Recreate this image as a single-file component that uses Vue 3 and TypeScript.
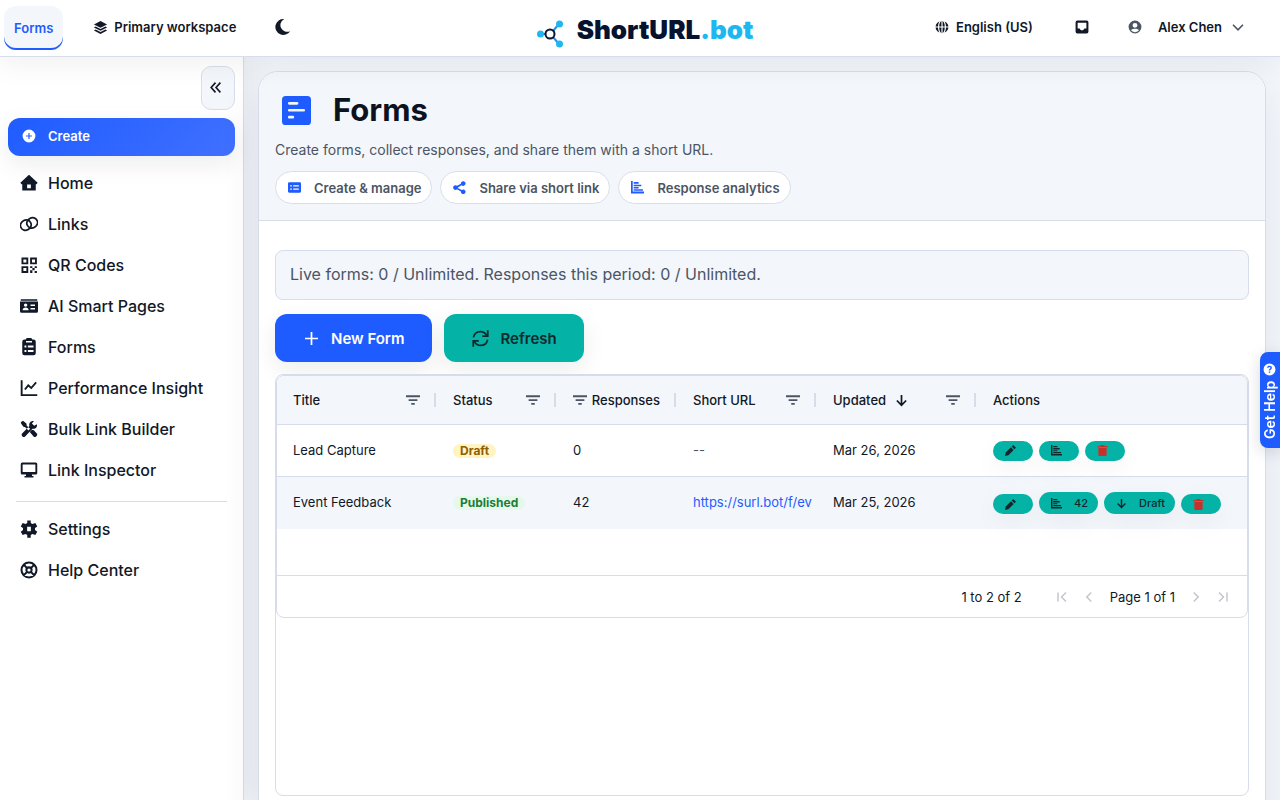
<script setup lang="ts">
import { h } from 'vue'

interface Glyph {
  fill?: string
  stroke?: string
  width?: number
}

const glyphs: Record<string, Glyph> = {
  layers: { fill: 'M12 1.5 22.5 7 12 12.3 1.5 7zM4.2 10.2 12 14.2l7.8-4 2.7 1.6L12 17.2 1.5 11.8zM4.2 15.2 12 19.2l7.8-4 2.7 1.6L12 22.4 1.5 16.8z' },
  moon: { fill: 'M13.5 1.5A8.6 8.6 0 0 0 21.5 17.5 10.6 10.6 0 1 1 13.5 1.5z' },
  globe: {
    fill: 'M11 1.5V11H7.2C7.4 6 8.9 2.4 11 1.5zM13 1.5c2.1.9 3.6 4.5 3.8 9.5H13zM11 13v9.500C8.900 21.600 7.400 18 7.200 13zM13 13h3.800c-.2 5-1.700 8.600-3.800 9.500zM7.500 2.500C6.200 4.600 5.300 7.600 5.200 11H1C1.400 7 4 3.800 7.500 2.500zM16.500 2.500C20 3.800 22.600 7 23 11h-4.200c-.1-3.400-1-6.400-2.300-8.500zM1 13h4.200c.1 3.400 1 6.400 2.300 8.500C4 20.200 1.400 17 1 13zM18.800 13H23c-.4 4-3 7.200-6.500 8.500 1.300-2.100 2.200-5.100 2.300-8.500z',
  },
  inbox: { fill: 'M4 1h16a3 3 0 0 1 3 3v16a3 3 0 0 1-3 3H4a3 3 0 0 1-3-3V4a3 3 0 0 1 3-3zM4.500 4.500v10H8c.6 2 2 3.200 4 3.200s3.400-1.200 4-3.200h3.500v-10z' },
  user: { fill: 'M12 1a11 11 0 1 1 0 22 11 11 0 0 1 0-22zM12 5a4.200 4.200 0 1 0 0 8.400A4.200 4.200 0 0 0 12 5zM5.200 17.200C6.700 19.500 9.200 21 12 21s5.300-1.500 6.800-3.800c-1.800-1.300-4.200-2-6.800-2s-5 .7-6.800 2z' },
  chevronDown: { stroke: 'M2 7.500 12 17.500l10-10', width: 3.200 },
  collapse: { stroke: 'M12 3 4 12l8 9M21 3l-8 9 8 9', width: 3 },
  plusCircle: { fill: 'M12 1a11 11 0 1 1 0 22 11 11 0 0 1 0-22zM11 7v4H7v2h4v4h2v-4h4v-2h-4V7z' },
  home: { fill: 'M12 1 23.500 11.500 22 13.500H21V22H3v-8.500H2L.5 11.500zM9.500 14v5h5v-5z' },
  links: { stroke: 'M1.500 17A7.200 6-30 1 1 14 10 7.200 6-30 1 1 1.500 17zM10 14A7.200 6-30 1 1 22.500 7 7.200 6-30 1 1 10 14z', width: 2.300 },
  qr: { fill: 'M2 2h9v9H2zM4.500 4.500v4h4v-4zM13.500 2h9v9h-9zM16 4.500v4h4v-4zM2 13.500h9v9H2zM4.500 16v4h4v-4zM13.500 13.500h3v2.500h-3zM19.500 13.500h3V16h-3zM16.500 16h3v3h-3zM13.500 19h3v3.500h-3zM19.500 20h3v2.500h-3z' },
  pages: { fill: 'M1 3h22v2H1zM0 6h24v13a2 2 0 0 1-2 2H2a2 2 0 0 1-2-2zM7.500 8.500a2.300 2.300 0 1 0 0 4.600 2.300 2.300 0 0 0 0-4.600zM3.500 17.500h8c0-2-1.800-3.400-4-3.400s-4 1.400-4 3.400zM14 10v2h6v-2zM14 14.500v2h6v-2z' },
  clipboard: { fill: 'M9 0h6l1.500 2H18a3 3 0 0 1 3 3v15a3 3 0 0 1-3 3H6a3 3 0 0 1-3-3V5a3 3 0 0 1 3-3h1.500zM8 4v2h8V4zM6 10v2.500h2.500V10zM10.500 10v2.500H18V10zM6 16v2.500h2.500V16zM10.500 16v2.500H18V16z' },
  chart: { stroke: 'M2.200 1.500v20H23M6.500 14 11 8.500l4 3.500 6.500-7.500', width: 2.500 },
  tools: { fill: 'M1.500 2.500 4 1l4.500 3.500.5 3 4.500 4.300-2.200 2.200L7 9.500 4.500 9 1 4zM22.500 5.500c1 4-2 6.800-5.800 6L6.500 22.200c-1.500 1.500-4.800-.8-4.300-3.700L12.500 8C11.500 4 14.500.8 18.500 1.500L15.800 4.800l3.200 3zM13 16l3-3 2.500.5 4.500 5c.5 2-2 4.500-4.300 4.300z' },
  monitor: { fill: 'M3 2h18a2 2 0 0 1 2 2v12a2 2 0 0 1-2 2h-5v2h2v2H6v-2h2v-2H3a2 2 0 0 1-2-2V4a2 2 0 0 1 2-2zM3.500 4.500v10h17v-10z' },
  gear: { fill: 'M9.700.5h4.600V4l2.200 1.300L20.500 4 23 8.500l-3 2.200v2.600l3 2.200-2.500 4.500-4-1.300-2.200 1.300v3.500H9.700V20l-2.200-1.300-4 1.300L1 15.500l3-2.200v-2.600L1 8.500 3.500 4l4 1.300L9.700 4zM9.500 9v6h5V9z' },
  lifebuoy: { stroke: 'M12 2a10 10 0 1 1 0 20 10 10 0 0 1 0-20zM12 8.500a3.500 3.500 0 1 1 0 7 3.500 3.500 0 0 1 0-7zM5 5l4.500 4.500M19 5l-4.500 4.500M5 19l4.500-4.500M19 19l-4.500-4.500', width: 2.700 },
  form: { fill: 'M3 0h18a3 3 0 0 1 3 3v18a3 3 0 0 1-3 3H3a3 3 0 0 1-3-3V3a3 3 0 0 1 3-3zM6 5a1 1 0 0 0 0 2.200h6.500a1 1 0 0 0 0-2.200zM6 10.700a1 1 0 0 0 0 2.200h12a1 1 0 0 0 0-2.200zM6 16.400a1 1 0 0 0 0 2.200h3a1 1 0 0 0 0-2.200z' },
  card: { fill: 'M2 2.500h20a2 2 0 0 1 2 2v15a2 2 0 0 1-2 2H2a2 2 0 0 1-2-2v-15a2 2 0 0 1 2-2zM4 8v2.200h3V8zM9.500 8v2.200H20V8zM4 14v2.200h3V14zM9.500 14v2.200H20V14z' },
  share: { fill: 'M4.500 7.800c1.200 0 2.200.4 3 1.100L14.600 5A4.300 4.300 0 1 1 16 7.900l-7 4v.8l7 4A4.300 4.300 0 1 1 14.600 19.500L7.500 15.300A4.300 4.300 0 1 1 4.500 7.800z' },
  bars: { fill: 'M0 0h3.200v19.500H24V23H0zM5 2h9v3H5zM5 6.800h14v3H5zM5 11.200h9v2.600H5zM5 15h17v2.800H5z' },
  plus: { stroke: 'M12 0v24M0 12h24', width: 3.200 },
  refresh: { stroke: 'M2 10.500C3 5 7.500 2.200 12 2.200c3.500 0 6.500 1.800 8.500 5M22.200.5v8H14.500M22 13.500c-1 5.500-5.500 8.300-10 8.300-3.500 0-6.500-1.800-8.500-5M1.800 23.500v-8h7.700', width: 2.500 },
  filter: { fill: 'M0 4h24v3.200H0zM4.500 10.500h15v3.200h-15zM9 17h6v3.200H9z' },
  arrowDown: { stroke: 'M12 2v18.500M3.500 12l8.500 8.800 8.500-8.800', width: 3.200 },
  pencil: { fill: 'M18 0 24 6l-3.500 3.500-6-6zM13 5l6 6L7.500 22.500 0 24l1.500-7.500z' },
  trash: { fill: 'M7.500 0h9v2H23v3H1V2h6.500zM3 6.500h18V21a3 3 0 0 1-3 3H6a3 3 0 0 1-3-3z' },
  first: { stroke: 'M4 3v18M20 3l-9 9 9 9', width: 3 },
  prev: { stroke: 'M16.500 3l-9 9 9 9', width: 3 },
  next: { stroke: 'M7.500 3l9 9-9 9', width: 3 },
  last: { stroke: 'M20 3v18M4 3l9 9-9 9', width: 3 },
  question: { fill: 'M12 1a11 11 0 1 1 0 22 11 11 0 0 1 0-22zM7.500 9h2.600c.1-1 .8-1.500 1.900-1.500s1.800.5 1.800 1.400c0 .8-.4 1.200-1.300 1.800-1.200.8-1.800 1.500-1.700 3.100h2.500c0-.9.4-1.200 1.300-1.900 1.100-.8 1.800-1.700 1.800-3.200 0-2.200-1.800-3.500-4.300-3.500-2.700 0-4.500 1.400-4.600 3.800zM10.600 15.500v2.700h2.800v-2.700z' },
}

const Icon = (props: { name: string; size: number }) => {
  const g = glyphs[props.name]
  return h(
    'svg',
    { class: 'icon', viewBox: '0 0 24 24', width: props.size, height: props.size, 'aria-hidden': 'true' },
    [
      g.fill ? h('path', { d: g.fill, fill: 'currentColor', 'fill-rule': 'evenodd' }) : null,
      g.stroke ? h('path', { d: g.stroke, fill: 'none', stroke: 'currentColor', 'stroke-width': g.width }) : null,
    ],
  )
}
Icon.props = ['name', 'size']

const mainNav = [
  { icon: 'home', label: 'Home' },
  { icon: 'links', label: 'Links' },
  { icon: 'qr', label: 'QR Codes' },
  { icon: 'pages', label: 'AI Smart Pages' },
  { icon: 'clipboard', label: 'Forms' },
  { icon: 'chart', label: 'Performance Insight' },
  { icon: 'tools', label: 'Bulk Link Builder' },
  { icon: 'monitor', label: 'Link Inspector' },
]
const extraNav = [
  { icon: 'gear', label: 'Settings' },
  { icon: 'lifebuoy', label: 'Help Center' },
]
const features = [
  { icon: 'card', label: 'Create & manage' },
  { icon: 'share', label: 'Share via short link' },
  { icon: 'bars', label: 'Response analytics' },
]
const columns = [
  { key: 'title', label: 'Title' },
  { key: 'status', label: 'Status' },
  { key: 'responses', label: 'Responses' },
  { key: 'url', label: 'Short URL' },
  { key: 'updated', label: 'Updated' },
  { key: 'actions', label: 'Actions' },
]
const forms = [
  { title: 'Lead Capture', status: 'Draft', responses: 0, url: '', updated: 'Mar 26, 2026' },
  { title: 'Event Feedback', status: 'Published', responses: 42, url: 'https://surl.bot/f/ev', updated: 'Mar 25, 2026' },
]
</script>

<template>
  <div class="app">
    <header class="topbar">
      <div class="top-left">
        <a class="tab" href="#">Forms</a>
        <button class="top-btn workspace"><Icon name="layers" :size="15" />Primary workspace</button>
        <button class="top-btn theme" aria-label="Toggle dark mode"><Icon name="moon" :size="18" /></button>
      </div>
      <a class="brand" href="#">
        <svg class="mark" viewBox="0 0 28 28" width="28" height="28" aria-hidden="true">
          <path d="M5 14h5M16 11l6-7M16 17l6 7" stroke="#2f8de4" stroke-width="2" fill="none" />
          <circle cx="3.500" cy="14" r="3.500" fill="#1eb8f0" />
          <circle cx="22.500" cy="4" r="3.500" fill="#1eb8f0" />
          <circle cx="22.500" cy="24" r="3.500" fill="#1eb8f0" />
          <circle cx="13" cy="14" r="4.500" fill="#fff" stroke="#0b1633" stroke-width="2" />
        </svg>
        <span class="wordmark">ShortURL<span class="tld">.bot</span></span>
      </a>
      <div class="top-right">
        <button class="top-btn"><Icon name="globe" :size="14" />English (US)</button>
        <button class="top-btn inbox" aria-label="Inbox"><Icon name="inbox" :size="14" /></button>
        <button class="top-btn account"><Icon class="muted" name="user" :size="14" />Alex Chen<Icon class="muted caret" name="chevronDown" :size="12" /></button>
      </div>
    </header>

    <div class="shell">
      <aside class="sidebar">
        <button class="collapse" aria-label="Collapse sidebar"><Icon name="collapse" :size="13" /></button>
        <button class="create"><Icon name="plusCircle" :size="14" />Create</button>
        <nav class="nav">
          <a v-for="n in mainNav" :key="n.label" class="nav-item" href="#"><Icon :name="n.icon" :size="18" />{{ n.label }}</a>
          <hr class="divider" />
          <a v-for="n in extraNav" :key="n.label" class="nav-item" href="#"><Icon :name="n.icon" :size="18" />{{ n.label }}</a>
        </nav>
      </aside>

      <main class="main">
        <section class="panel">
          <div class="panel-head">
            <h1 class="title"><Icon name="form" :size="29" />Forms</h1>
            <p class="lead">Create forms, collect responses, and share them with a short URL.</p>
            <ul class="chips">
              <li v-for="f in features" :key="f.label" class="chip"><Icon :name="f.icon" :size="13" />{{ f.label }}</li>
            </ul>
          </div>
          <div class="panel-body">
            <p class="usage">Live forms: 0 / Unlimited. Responses this period: 0 / Unlimited.</p>
            <div class="toolbar">
              <button class="btn primary"><Icon name="plus" :size="13" />New Form</button>
              <button class="btn teal"><Icon name="refresh" :size="17" />Refresh</button>
            </div>
            <div class="grid-frame">
              <div class="grid">
                <div class="grid-view">
                  <table class="table">
                    <colgroup><col v-for="c in columns" :key="c.key" :class="'col-' + c.key" /></colgroup>
                    <thead>
                      <tr>
                        <th v-for="c in columns" :key="c.key" scope="col">
                          <div class="th" :class="'th-' + c.key">
                            <span class="th-label">{{ c.label }}<Icon v-if="c.key === 'updated'" name="arrowDown" :size="13" /></span>
                            <button v-if="c.key !== 'actions'" class="filter" :aria-label="'Filter ' + c.label"><Icon name="filter" :size="14" /></button>
                          </div>
                        </th>
                      </tr>
                    </thead>
                    <tbody>
                      <tr v-for="f in forms" :key="f.title">
                        <td>{{ f.title }}</td>
                        <td><span class="badge" :class="f.status.toLowerCase()">{{ f.status }}</span></td>
                        <td>{{ f.responses }}</td>
                        <td class="url"><a v-if="f.url" :href="f.url">{{ f.url }}</a><span v-else class="none">--</span></td>
                        <td>{{ f.updated }}</td>
                        <td class="action-cell">
                          <div class="actions">
                            <button class="act" :aria-label="'Edit ' + f.title"><Icon name="pencil" :size="11" /></button>
                            <button class="act" :aria-label="'Responses to ' + f.title"><Icon name="bars" :size="11" /><span v-if="f.responses">{{ f.responses }}</span></button>
                            <button v-if="f.status === 'Published'" class="act"><Icon name="arrowDown" :size="11" /><span>Draft</span></button>
                            <button class="act danger" :aria-label="'Delete ' + f.title"><Icon name="trash" :size="11" /></button>
                          </div>
                        </td>
                      </tr>
                    </tbody>
                  </table>
                </div>
                <div class="pager">
                  <span class="range">1 to 2 of 2</span>
                  <button disabled aria-label="First page"><Icon name="first" :size="12" /></button>
                  <button disabled aria-label="Previous page"><Icon name="prev" :size="12" /></button>
                  <span>Page 1 of 1</span>
                  <button disabled aria-label="Next page"><Icon name="next" :size="12" /></button>
                  <button disabled aria-label="Last page"><Icon name="last" :size="12" /></button>
                </div>
              </div>
            </div>
          </div>
        </section>
      </main>
    </div>

    <button class="help"><span>Get Help</span><Icon class="upright" name="question" :size="13" /></button>
  </div>
</template>

<style>
body {
  margin: 0;
}
</style>

<style scoped>
* {
  box-sizing: border-box;
}
.app {
  display: flex;
  flex-direction: column;
  height: 100vh;
  overflow: hidden;
  background: #f3f6fb;
  color: #111827;
  font-family: Inter, "Liberation Sans", sans-serif;
  font-size: 14px;
}
button {
  font: inherit;
  color: inherit;
  border: 0;
  background: none;
  padding: 0;
}
a {
  color: inherit;
  text-decoration: none;
}
.icon {
  display: block;
  flex: none;
}
.topbar {
  position: relative;
  z-index: 2;
  display: grid;
  grid-template-columns: 1fr auto 1fr;
  align-items: center;
  flex: none;
  height: 57px;
  padding: 0 4px;
  background: #fff;
  border-bottom: 1px solid #d8ddeb;
  box-shadow: 0 8px 28px rgba(15, 23, 42, 0.06);
}
.top-left,
.top-right {
  display: flex;
  align-items: center;
}
.top-left {
  gap: 30px;
}
.top-right {
  justify-content: flex-end;
  gap: 39px;
  padding-right: 32px;
}
.tab {
  height: 44px;
  padding: 0 10px;
  line-height: 44px;
  font-size: 13px;
  font-weight: 600;
  color: #1f5cff;
  background: #f3f6fb;
  border-radius: 12px;
  box-shadow: inset 0 -2px 0 #1f5cff;
}
.top-btn {
  display: flex;
  align-items: center;
  gap: 7px;
  padding-bottom: 2px;
  font-size: 13px;
  font-weight: 600;
}
.workspace {
  gap: 6px;
}
.theme {
  padding-left: 8px;
}
.inbox {
  padding-left: 3px;
}
.account {
  gap: 16px;
}
.caret {
  margin-left: -6px;
}
.muted {
  color: #4b5563;
}
.brand {
  display: flex;
  align-items: center;
  gap: 12px;
  padding-left: 10px;
}
.mark {
  margin-top: 12px;
}
.wordmark {
  padding-top: 4px;
  font-size: 26px;
  line-height: 32px;
  font-weight: 900;
  color: #06122e;
}
.tld {
  color: #1eb8f0;
}
.shell {
  display: flex;
  flex: 1;
  min-height: 0;
}
.sidebar {
  display: flex;
  flex-direction: column;
  flex: none;
  width: 244px;
  padding: 9px 8px;
  background: #fff;
  border-right: 1px solid #d5dbe8;
  box-shadow: 8px 0 28px rgba(15, 23, 42, 0.06);
}
.collapse {
  display: grid;
  place-items: center;
  align-self: flex-end;
  width: 34px;
  height: 44px;
  padding: 0 6px 2px 0;
  background: #f3f6fb;
  border: 1px solid #d8deeb;
  border-radius: 10px;
}
.create {
  display: flex;
  align-items: center;
  gap: 12px;
  height: 38px;
  margin-top: 8px;
  padding: 0 14px 2px;
  font-size: 13px;
  font-weight: 600;
  color: #fff;
  background: linear-gradient(135deg, #1f5cff, #4070ff);
  border-radius: 12px;
  box-shadow: 0 8px 24px rgba(15, 23, 42, 0.08);
}
.nav {
  display: flex;
  flex-direction: column;
  margin-top: 6px;
}
.nav-item {
  display: flex;
  align-items: center;
  gap: 10px;
  height: 41px;
  padding: 0 12px;
  font-size: 16px;
  font-weight: 500;
}
.divider {
  width: auto;
  margin: 11px 8px 6px;
  border: 0;
  border-top: 1px solid #d9dbe5;
  align-self: stretch;
}
.main {
  flex: 1;
  min-width: 0;
  padding: 14px;
}
.panel {
  background: #fff;
  border: 1px solid #d6dce9;
  border-radius: 20px;
  box-shadow: 0 16px 40px rgba(15, 23, 42, 0.08);
  min-height: 100vh;
}
.panel-head {
  padding: 20px 16px 16px;
  background: #f3f6fb;
  border-bottom: 1px solid #d6dce9;
  border-radius: 19px 19px 0 0;
}
.title {
  display: flex;
  align-items: center;
  gap: 22px;
  margin: 0;
  padding-left: 7px;
  font-size: 31px;
  line-height: 36px;
  font-weight: 700;
  color: #0b1220;
}
.title .icon {
  color: #1f5cff;
}
.lead {
  margin: 11px 0;
  font-size: 14px;
  line-height: 21px;
  color: #4b5563;
}
.chips {
  display: flex;
  gap: 8px;
  margin: 0;
  padding: 0;
  list-style: none;
}
.chip {
  display: flex;
  align-items: center;
  gap: 13px;
  height: 33px;
  padding: 0 10px 0 12px;
  font-size: 13px;
  font-weight: 600;
  color: #4b5563;
  background: #fff;
  border: 1px solid #d8deeb;
  border-radius: 17px;
}
.chip .icon {
  color: #1f5cff;
}
.panel-body {
  padding: 29px 16px;
}
.usage {
  margin: 0;
  padding: 11px 14px 13px;
  font-size: 16px;
  line-height: 24px;
  color: #4b5563;
  background: #f3f6fb;
  border: 1px solid #d6dce9;
  border-radius: 8px;
}
.toolbar {
  display: flex;
  gap: 12px;
  margin: 14px 0 12px;
}
.btn {
  display: flex;
  align-items: center;
  height: 48px;
  font-size: 15px;
  font-weight: 600;
  border-radius: 12px;
  box-shadow: 0 8px 24px rgba(15, 23, 42, 0.08);
}
.primary {
  gap: 13px;
  padding: 0 28px 0 30px;
  color: #fff;
  background: #1f5cff;
}
.teal {
  gap: 11px;
  padding: 0 27px 0 28px;
  color: #102a2c;
  background: #04b3a6;
}
.grid-frame {
  min-height: 422px;
  border: 1px solid #d6dce9;
  border-radius: 8px;
  position: relative;
  background: #fff;
}
.grid {
  border: 1px solid #d6dce9;
  border-radius: 8px;
  overflow: hidden;
}
.grid-view {
  min-height: 199px;
}
.table {
  width: 100%;
  table-layout: fixed;
  border-collapse: separate;
  border-spacing: 0;
  font-size: 13px;
}
.col-title,
.col-updated {
  width: 160px;
}
.col-status,
.col-responses {
  width: 120px;
}
.col-url {
  width: 140px;
}
th {
  height: 49px;
  padding: 0;
  font-weight: 500;
  background: #f3f6fb;
  border-bottom: 1px solid #d6dce9;
}
.th {
  display: flex;
  align-items: center;
  justify-content: space-between;
  height: 14px;
  padding: 0 14px 0 16px;
  border-right: 2px solid #d6dce9;
  margin-right: 1px;
}
.th-responses {
  flex-direction: row-reverse;
}
.th-actions {
  border: 0;
}
.th-label {
  display: flex;
  align-items: center;
  gap: 9px;
}
.filter {
  color: #4b5563;
}
td {
  height: 52px;
  padding: 0 0 2px 16px;
}
.action-cell {
  padding-bottom: 0;
}
tbody tr:first-child td {
  border-bottom: 1px solid #d6dce9;
}
tbody tr:nth-child(even) td {
  background: #f3f6fb;
}
.url {
  white-space: nowrap;
}
.url a {
  color: #1f5cff;
}
.none {
  color: #4b5563;
}
.badge {
  display: inline-block;
  padding: 0 7px;
  font-size: 12px;
  line-height: 14px;
  font-weight: 700;
  border-radius: 7px;
}
.draft {
  color: #8f5e00;
  background: #fff4c2;
}
.published {
  color: #1a7f37;
  background: #e6f7ec;
}
.actions {
  display: flex;
  align-items: flex-end;
  gap: 6px;
}
.act {
  display: flex;
  align-items: center;
  gap: 12px;
  height: 20px;
  min-width: 40px;
  padding: 0 11px 0 12px;
  font-size: 11px;
  font-weight: 500;
  color: #102a2c;
  background: #04b3a6;
  border-radius: 11px;
  box-shadow: 0 8px 24px rgba(15, 23, 42, 0.05);
}
.act:has(span) {
  height: 22px;
  padding-right: 10px;
}
.danger {
  color: #c9302c;
}
.pager {
  display: flex;
  align-items: center;
  justify-content: flex-end;
  gap: 15px;
  height: 42px;
  padding: 0 18px;
  font-size: 13px;
  border-top: 1px solid #d6dce9;
}
.range {
  margin-right: 19px;
}
.pager button {
  color: #c3c6cc;
}
.help {
  position: fixed;
  right: 0;
  top: 50%;
  z-index: 3;
  display: flex;
  align-items: center;
  gap: 5px;
  height: 96px;
  width: 20px;
  margin-top: -48px;
  padding: 9px 4px;
  white-space: nowrap;
  writing-mode: vertical-rl;
  transform: rotate(180deg);
  font-size: 14px;
  line-height: 12px;
  font-weight: 600;
  color: #fff;
  background: #1f5cff;
  border-radius: 0 8px 8px 0;
  box-shadow: 0 -4px 16px rgba(15, 23, 42, 0.16);
}
.upright {
  transform: rotate(180deg);
}
</style>
